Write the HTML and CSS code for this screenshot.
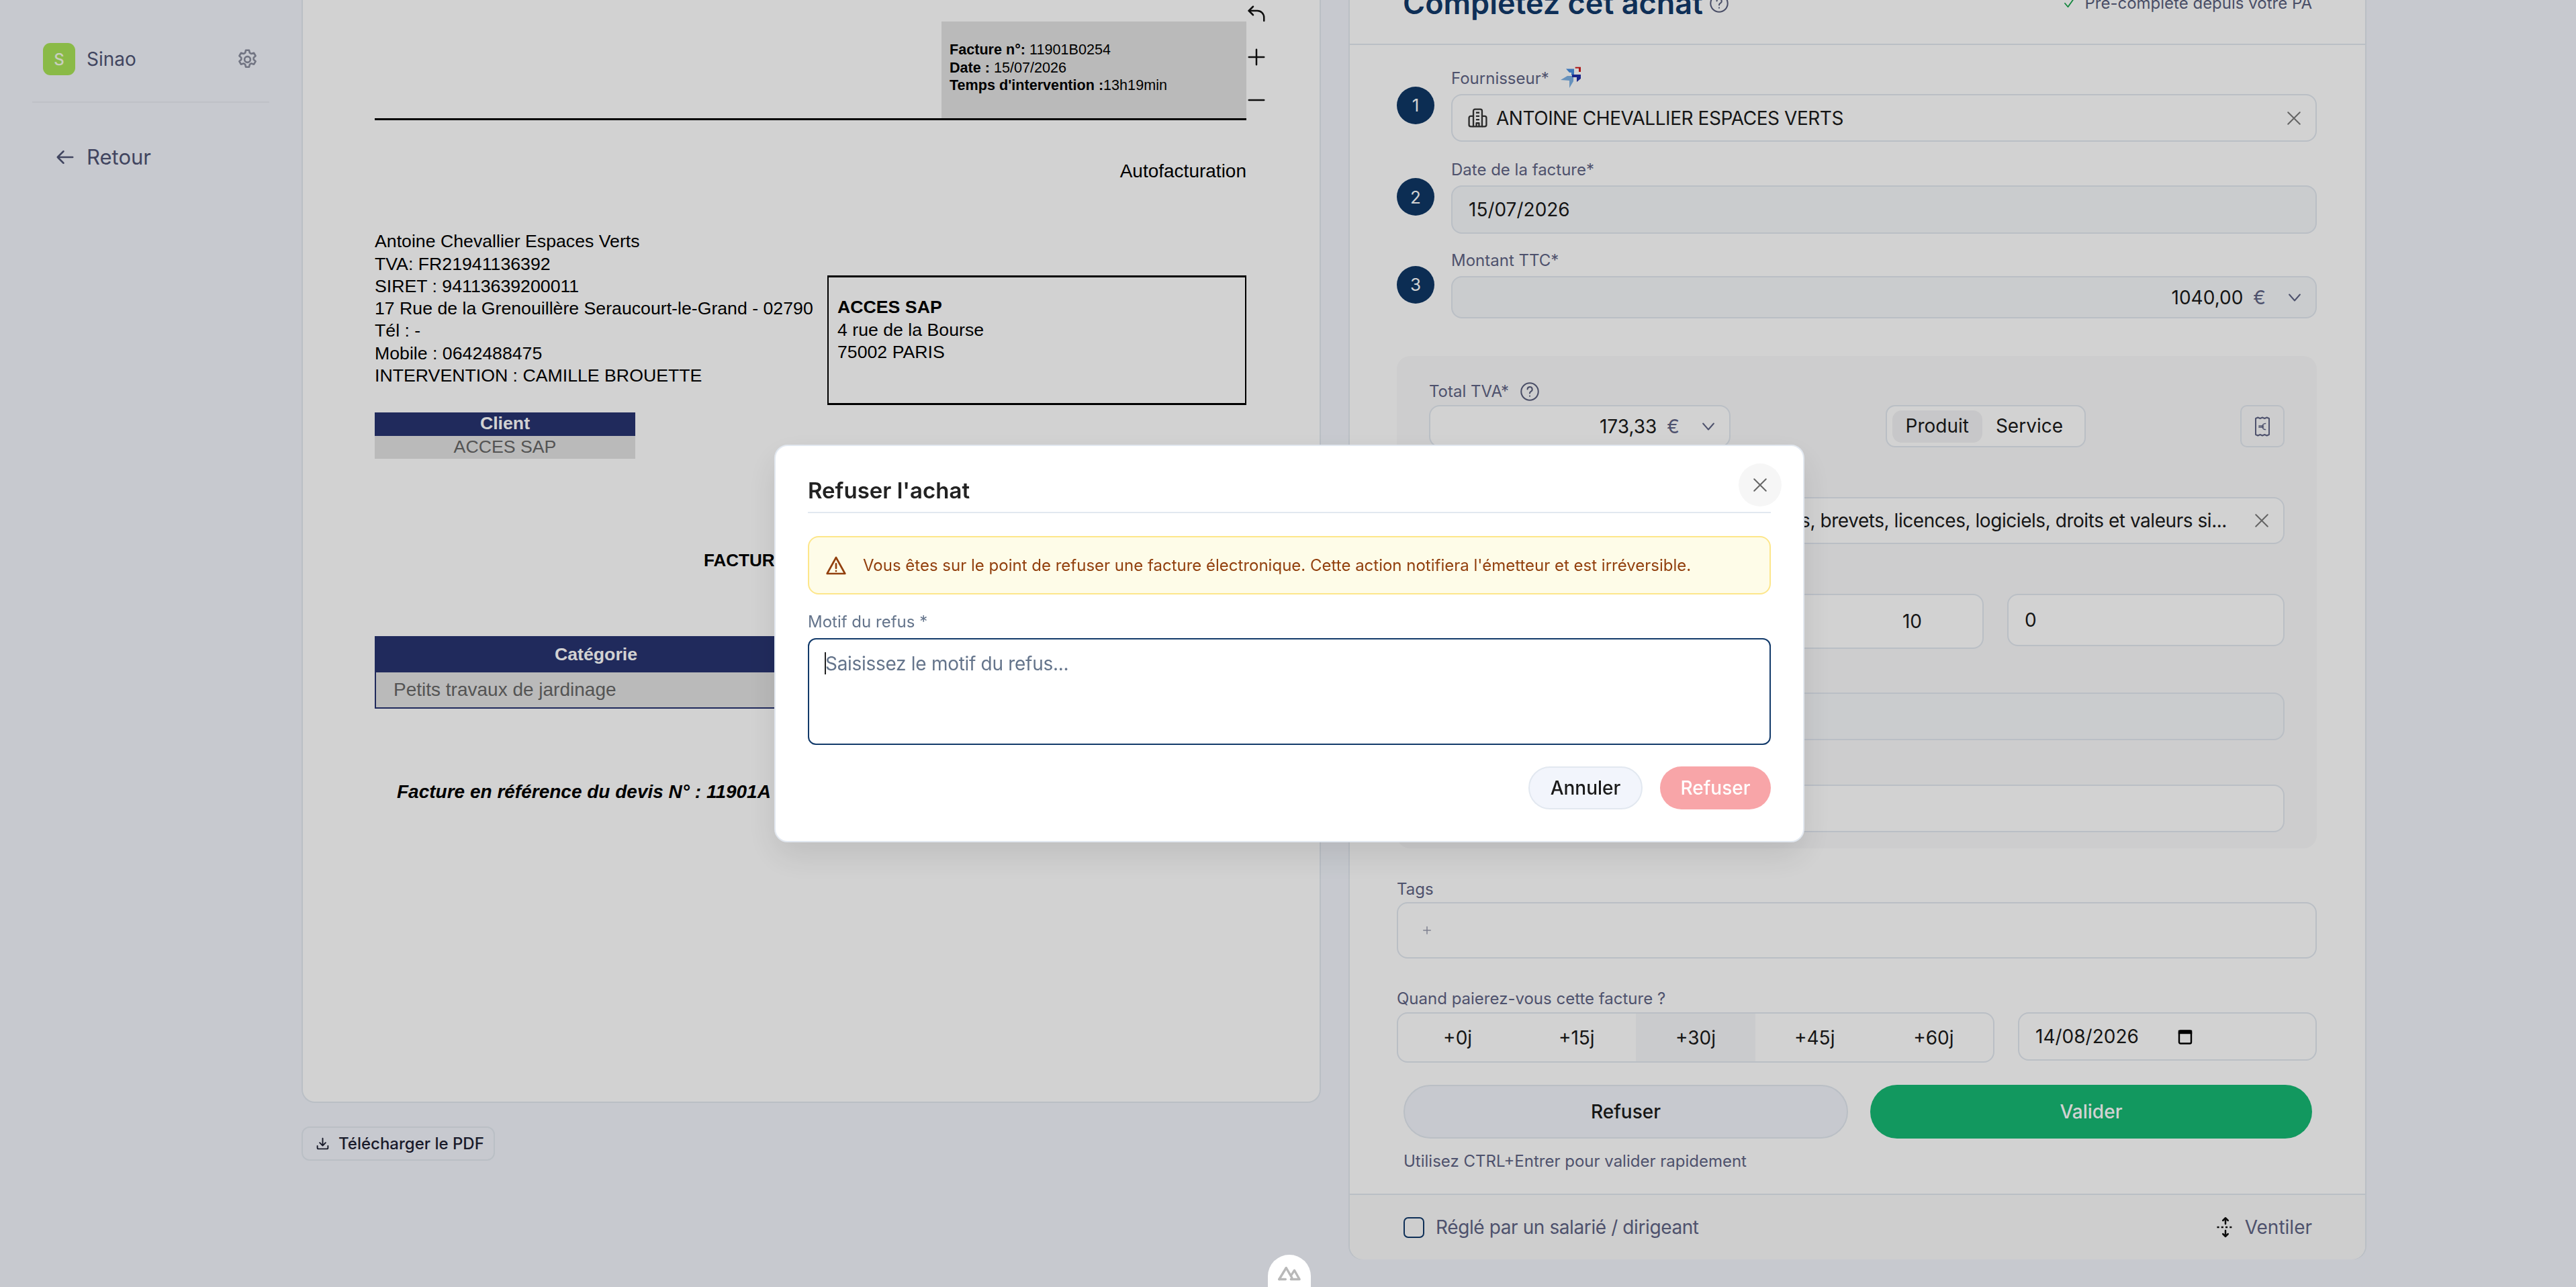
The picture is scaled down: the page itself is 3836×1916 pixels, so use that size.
FILE: index.html
```html
<!DOCTYPE html>
<html lang="fr">
<head>
    <meta charset="UTF-8">
    <title>Complétez cet achat</title>
    <link rel="stylesheet" href="styles.css">
</head>
<body>
    <aside class="sidebar">
        <div class="org">
            <span class="org-logo">S</span>
            <span class="org-name">Sinao</span>
            <svg class="org-gear" viewBox="0 0 24 24" fill="none" stroke="currentColor" stroke-width="1.8" stroke-linejoin="round"><path d="M10.3 2.6h3.4l.6 2.6 1.7 1 2.6-.8 1.7 3-2 1.8v2l2 1.7-1.7 3-2.6-.8-1.7 1-.6 2.6h-3.4l-.6-2.6-1.7-1-2.6.8-1.7-3 2-1.7v-2l-2-1.8 1.7-3 2.6.8 1.7-1z"/><circle cx="12" cy="12" r="3"/></svg>
        </div>
        <a class="back-link">
            <svg viewBox="0 0 24 24" fill="none" stroke="currentColor" stroke-width="2" stroke-linecap="round" stroke-linejoin="round"><path d="M21 12H3M10 5l-7 7 7 7"/></svg>
            Retour
        </a>
    </aside>

    <main class="main">
        <section class="pdf-col">
            <div class="pdf-card">
                <div class="pdf-tools">
                    <svg viewBox="0 0 24 24" fill="none" stroke="currentColor" stroke-width="2" stroke-linecap="round" stroke-linejoin="round"><path d="M8 3 3 8l5 5"/><path d="M3 8h10a8 8 0 0 1 8 8v4"/></svg>
                    <svg viewBox="0 0 24 24" fill="none" stroke="currentColor" stroke-width="2" stroke-linecap="round"><path d="M12 3v18M3 12h18"/></svg>
                    <svg viewBox="0 0 24 24" fill="none" stroke="currentColor" stroke-width="2" stroke-linecap="round"><path d="M3 12h18"/></svg>
                </div>
                <div class="pdf-page">
                    <div class="pdf-head">
                        <div class="pdf-ref">
                            <b>Facture n°:</b> 11901B0254<br>
                            <b>Date :</b> 15/07/2026<br>
                            <b>Temps d'intervention :</b>13h19min
                        </div>
                    </div>
                    <p class="pdf-type">Autofacturation</p>
                    <div class="pdf-parties">
                        <div class="pdf-seller">
                            Antoine Chevallier Espaces Verts<br>
                            TVA: FR21941136392<br>
                            SIRET : 94113639200011<br>
                            17 Rue de la Grenouillère Seraucourt-le-Grand - 02790<br>
                            Tél : -<br>
                            Mobile : 0642488475<br>
                            INTERVENTION : CAMILLE BROUETTE
                        </div>
                        <div class="pdf-buyer">
                            <b>ACCES SAP</b><br>
                            4 rue de la Bourse<br>
                            75002 PARIS
                        </div>
                    </div>
                    <div class="pdf-client">
                        <div class="pdf-th">Client</div>
                        <div class="pdf-td">ACCES SAP</div>
                    </div>
                    <p class="pdf-title">FACTURE</p>
                    <div class="pdf-table">
                        <div class="pdf-th">Catégorie</div>
                        <div class="pdf-td">Petits travaux de jardinage</div>
                    </div>
                    <p class="pdf-note">Facture en référence du devis N° : 11901A</p>
                </div>
            </div>
            <button class="pdf-download">
                <svg viewBox="0 0 24 24" fill="none" stroke="currentColor" stroke-width="2.2" stroke-linecap="round" stroke-linejoin="round"><path d="M12 3v12M7 10.5l5 5 5-5M3 16v3a2 2 0 0 0 2 2h14a2 2 0 0 0 2-2v-3"/></svg>
                Télécharger le PDF
            </button>
        </section>

        <section class="form-card">
            <header class="form-head">
                <h1>Complétez cet achat
                    <svg class="help" viewBox="1 1 22 22" fill="none" stroke="currentColor" stroke-width="1.6" stroke-linecap="round"><circle cx="12" cy="12" r="10"/><path d="M9.3 9.3a2.8 2.8 0 1 1 4 2.6c-.8.5-1.3 1-1.3 2"/><path d="M12 17.2v.1"/></svg>
                </h1>
                <span class="prefill">
                    <svg viewBox="0 0 24 24" fill="none" stroke="#16a34a" stroke-width="2.4" stroke-linecap="round" stroke-linejoin="round"><path d="m4 12 6 7L20 5"/></svg>
                    Pré-complété depuis votre PA
                </span>
            </header>

            <div class="form-body">
                <div class="step">
                    <span class="step-num">1</span>
                    <div class="field">
                        <label class="label label-icon">Fournisseur*
                            <svg class="pa-logo" viewBox="0 0 30 32"><path fill="#7fb2e5" d="M0 20 10 14h9v8l-6 10V21z"/><path fill="#4a90e2" d="M8 3.5h12V13h-4V9h-3z"/><path fill="#1f2fa8" d="M17 12h13v6l-6 5v-7h-7z"/><path fill="#d11f1f" d="M21.7.7H30V8h-3V2.7h-5.3z"/></svg>
                        </label>
                        <div class="input input-tall">
                            <svg class="icon-building" viewBox="0 0 24 24" fill="none" stroke="currentColor" stroke-width="1.8" stroke-linejoin="round"><path d="M7 22V4a2 2 0 0 1 2-2h6a2 2 0 0 1 2 2v18z"/><path d="M7 10H4a2 2 0 0 0-2 2v8a2 2 0 0 0 2 2h3M17 10h3a2 2 0 0 1 2 2v8a2 2 0 0 1-2 2h-3M10 6h4M10 10h4M10 14h4M10.5 22v-4h3v4"/></svg>
                            <span class="input-grow supplier-name">ANTOINE CHEVALLIER ESPACES VERTS</span>
                            <svg class="icon-x" viewBox="4 4 16 16" fill="none" stroke="currentColor" stroke-width="1.6" stroke-linecap="round"><path d="M5 5l14 14M19 5 5 19"/></svg>
                        </div>
                    </div>
                </div>
                <div class="step step-date">
                    <span class="step-num">2</span>
                    <div class="field">
                        <label class="label">Date de la facture*</label>
                        <div class="input input-date input-off">15/07/2026</div>
                    </div>
                </div>
                <div class="step">
                    <span class="step-num">3</span>
                    <div class="field">
                        <label class="label">Montant TTC*</label>
                        <div class="input input-amount input-off">
                            <span class="input-grow num">1040,00</span>
                            <span class="euro">€</span>
                            <svg class="icon-chev" viewBox="4 6 16 12" fill="none" stroke="currentColor" stroke-width="1.8" stroke-linecap="round" stroke-linejoin="round"><path d="m5 8 7 8 7-8"/></svg>
                        </div>
                    </div>
                </div>

                <div class="panel">
                    <label class="label label-icon">Total TVA*
                        <svg class="help" viewBox="1 1 22 22" fill="none" stroke="currentColor" stroke-width="1.6" stroke-linecap="round"><circle cx="12" cy="12" r="10"/><path d="M9.3 9.3a2.8 2.8 0 1 1 4 2.6c-.8.5-1.3 1-1.3 2"/><path d="M12 17.2v.1"/></svg>
                    </label>
                    <div class="panel-top">
                        <div class="input input-vat">
                            <span class="input-grow num">173,33</span>
                            <span class="euro">€</span>
                            <svg class="icon-chev" viewBox="4 6 16 12" fill="none" stroke="currentColor" stroke-width="1.8" stroke-linecap="round" stroke-linejoin="round"><path d="m5 8 7 8 7-8"/></svg>
                        </div>
                        <div class="kind-toggle">
                            <span class="kind kind-on">Produit</span>
                            <span class="kind">Service</span>
                        </div>
                        <span class="receipt-btn">
                            <svg viewBox="0 0 24 30" fill="none" stroke="currentColor" stroke-width="2" stroke-linejoin="round" stroke-linecap="round"><path d="M2 3l3.3-1.5L8.6 3 12 1.5 15.3 3l3.3-1.5L22 3v24l-3.4 1.5-3.3-1.5-3.3 1.5L8.6 27l-3.3 1.5L2 27z"/><path d="M16.5 10.5a4.5 4.5 0 1 0 0 9M7 14h6.500M7 16h6.500" stroke-width="1.7"/></svg>
                        </span>
                    </div>
                    <div class="input input-cat">
                        <span class="cat-text">Concessions, brevets, licences, logiciels, droits et valeurs si...</span>
                        <svg class="icon-x" viewBox="4 4 16 16" fill="none" stroke="currentColor" stroke-width="1.6" stroke-linecap="round"><path d="M5 5l14 14M19 5 5 19"/></svg>
                    </div>
                    <div class="panel-row">
                        <div class="input input-qty">10</div>
                        <div class="input input-zero">0</div>
                    </div>
                    <div class="input input-line input-off"></div>
                    <div class="input input-line input-last"></div>
                </div>

                <label class="label label-tags">Tags</label>
                <div class="input input-tags">
                    <svg viewBox="0 0 24 24" fill="none" stroke="currentColor" stroke-width="2" stroke-linecap="round"><path d="M12 5v14M5 12h14"/></svg>
                </div>

                <label class="label label-when">Quand paierez-vous cette facture ?</label>
                <div class="terms-row">
                    <div class="terms">
                        <span class="term">+0j</span>
                        <span class="term">+15j</span>
                        <span class="term term-on">+30j</span>
                        <span class="term">+45j</span>
                        <span class="term">+60j</span>
                    </div>
                    <div class="input input-due">
                        <span>14/08/2026</span>
                        <svg viewBox="0 0 22 24" fill="none" stroke="#000" stroke-width="2.4"><rect x="2" y="3.5" width="18" height="19" rx="2"/><path d="M2 4h18v3H2z" fill="#000"/></svg>
                    </div>
                </div>

                <div class="actions">
                    <button class="btn-refuse">Refuser</button>
                    <button class="btn-validate">Valider</button>
                </div>
                <p class="hint">Utilisez CTRL+Entrer pour valider rapidement</p>
            </div>

            <footer class="form-foot">
                <label class="paid-by"><span class="checkbox"></span>Réglé par un salarié / dirigeant</label>
                <span class="split">
                    <svg viewBox="1 0 22 24" fill="none" stroke="#111" stroke-width="2" stroke-linecap="round" stroke-linejoin="round"><path d="M12 8V1.5M9 4l3-3 3 3M12 16v6.5M9 20l3 3 3-3"/><path d="M2 12h20" stroke-dasharray="2.5 2.5" stroke-linecap="butt"/></svg>
                    Ventiler
                </span>
            </footer>
        </section>
    </main>

    <div class="overlay">
        <div class="modal">
            <div class="modal-head">
                <h2>Refuser l'achat</h2>
                <button class="modal-close">
                    <svg viewBox="4 4 16 16" fill="none" stroke="currentColor" stroke-width="1.6" stroke-linecap="round"><path d="M5 5l14 14M19 5 5 19"/></svg>
                </button>
            </div>
            <div class="alert">
                <svg viewBox="0 0 24 24" fill="none" stroke="currentColor" stroke-width="2" stroke-linecap="round" stroke-linejoin="round"><path d="M12 3 2 21h20z"/><path d="M12 10v5M12 18v.1"/></svg>
                Vous êtes sur le point de refuser une facture électronique. Cette action notifiera l'émetteur et est irréversible.
            </div>
            <label class="modal-label">Motif du refus *</label>
            <div class="modal-field">
                <textarea class="modal-text" placeholder="Saisissez le motif du refus..."></textarea>
            </div>
            <div class="modal-actions">
                <button class="modal-cancel">Annuler</button>
                <button class="modal-refuse">Refuser</button>
            </div>
        </div>
    </div>

    <button class="nuxt-btn">
        <svg viewBox="0 0 36 24" fill="none" stroke="#b9b9b9" stroke-width="3.6" stroke-linejoin="round" stroke-linecap="round"><path d="M2 21 13 3l9 15.5"/><path d="M20.5 21H34L26 7l-5 7.5"/><path d="M2 21h10"/></svg>
    </button>
</body>
</html>
```

FILE: styles.css
```css
/* Global Styles */
* {
    box-sizing: border-box;
}

body {
    margin: 0;
    height: 1916px;
    overflow: hidden;
    display: flex;
    background: #f2f5fc;
    font-family: "Inter", sans-serif;
    font-size: 28px;
    color: #1a1a1a;
}

button {
    font-family: inherit;
    cursor: pointer;
}

/* Sidebar */
.sidebar {
    width: 449px;
    flex-shrink: 0;
    padding: 64px 48px 0;
}

.org {
    display: flex;
    align-items: center;
    height: 48px;
    margin-bottom: 41px;
    padding-left: 16px;
    color: #4f5475;
    position: relative;
}

.org::after {
    content: "";
    position: absolute;
    left: 0;
    right: 0;
    bottom: -41px;
    border-bottom: 2px solid #e8ebf1;
}

.org-logo {
    width: 48px;
    height: 48px;
    border-radius: 11px;
    background: #a8e257;
    color: #f4fbe8;
    font-size: 24px;
    font-weight: 500;
    display: flex;
    align-items: center;
    justify-content: center;
    margin-right: 17px;
}

.org-name {
    flex: 1;
}

.org-gear {
    width: 35px;
    height: 35px;
    margin-right: 15px;
    color: #8b8e9f;
}

.back-link {
    display: flex;
    align-items: center;
    gap: 17px;
    margin-top: 103px;
    padding-left: 34px;
    font-size: 31px;
    color: #4f5475;
    line-height: 38px;
}

.back-link svg {
    width: 30px;
    height: 30px;
}

/* Main columns */
.main {
    display: flex;
    gap: 41px;
    align-items: flex-start;
}

.pdf-col {
    width: 1518px;
}

.pdf-card {
    height: 1642px;
    background: #fff;
    border: 2px solid #e2e8f0;
    border-top: none;
    border-radius: 0 0 20px 20px;
    position: relative;
    overflow: hidden;
}

.pdf-tools {
    position: absolute;
    top: 6px;
    left: 1405px;
    display: flex;
    flex-direction: column;
    gap: 34px;
    color: #111;
}

.pdf-tools svg {
    width: 30px;
    height: 30px;
}

/* Invoice rendered inside the viewer */
.pdf-page {
    padding: 0 109px 0 107px;
    font-family: "Liberation Sans", Arial, sans-serif;
    font-size: 26.7px;
    line-height: 33.3px;
    color: #000;
}

.pdf-head {
    display: flex;
    justify-content: flex-end;
    padding-top: 32px;
    border-bottom: 3px solid #000;
}

.pdf-ref {
    width: 454px;
    height: 144px;
    padding: 29px 12px 0;
    background: #e2e2e2;
    font-size: 21.6px;
    line-height: 26.7px;
}

.pdf-type {
    margin: 59px 0 0;
    text-align: right;
    font-size: 28px;
}

.pdf-parties {
    display: flex;
    justify-content: space-between;
    margin-top: 72px;
}

.pdf-seller {
    white-space: nowrap;
}

.pdf-buyer {
    width: 624px;
    height: 193px;
    margin-top: 67px;
    padding: 28px 13px 0;
    border: 2px solid #000;
    border-width: 3px 2px;
}

.pdf-client {
    width: 388px;
    margin-top: 11px;
    text-align: center;
}

.pdf-th {
    height: 35px;
    line-height: 33px;
    background: #283470;
    color: #fff;
    font-weight: 700;
    text-align: center;
}

.pdf-td {
    height: 34px;
    line-height: 32px;
    background: #e2e2e2;
    color: #666;
}

.pdf-title {
    margin: 135px 0 0 490px;
    font-weight: 700;
    font-size: 26px;
}

.pdf-table {
    margin-top: 95px;
    border: 2px solid #283470;
    border-top: none;
    height: 108px;
}

.pdf-table .pdf-th {
    height: 54px;
    line-height: 54px;
    width: 655px;
}

.pdf-table .pdf-td {
    height: 52px;
    line-height: 52px;
    padding-left: 26px;
    font-size: 28px;
}

.pdf-note {
    margin: 107px 0 0 33px;
    font-weight: 700;
    font-style: italic;
    font-size: 28px;
}

.pdf-download {
    display: flex;
    align-items: center;
    gap: 13px;
    width: 288px;
    height: 51px;
    margin-top: 35px;
    padding: 0 0 0 19px;
    background: #f2f5fc;
    border: 2px solid #e2e8f0;
    border-radius: 12px;
    font-size: 24px;
    font-weight: 500;
    color: #1f2133;
    white-space: nowrap;
}

.pdf-download svg {
    width: 21px;
    height: 21px;
}

/* Form card */
.form-card {
    width: 1516px;
    height: 1875px;
    background: #fff;
    border: 2px solid #e2e8f0;
    border-top: none;
    border-radius: 0 0 20px 20px;
}

.form-head {
    height: 67px;
    display: flex;
    justify-content: space-between;
    align-items: flex-end;
    padding: 0 79px 37px 79px;
    border-bottom: 2px solid #e2e8f0;
}

.form-head h1 {
    margin: 0 0 -2px;
    font-size: 45px;
    line-height: 50px;
    font-weight: 600;
    color: #123a6a;
    white-space: nowrap;
    display: flex;
    align-items: center;
    gap: 10px;
}

.help {
    width: 28px;
    height: 28px;
    color: #5a5f7d;
}

.prefill {
    display: flex;
    align-items: center;
    gap: 14px;
    margin-bottom: 9px;
    font-size: 24px;
    color: #5a5f7d;
    white-space: nowrap;
}

.prefill svg {
    width: 18px;
    height: 18px;
}

.form-body {
    padding: 35px 72px 0 70px;
}

.label {
    display: block;
    font-size: 24px;
    line-height: 30px;
    color: #5f6485;
}

.label-icon {
    display: flex;
    align-items: center;
    gap: 17px;
}

.pa-logo {
    width: 30px;
    height: 32px;
    margin: -5px 0 -1px;
}

.step {
    display: flex;
    align-items: center;
    gap: 25px;
    margin-bottom: 27px;
}

.step-date {
    margin-bottom: 25px;
}

.step-num {
    width: 56px;
    height: 56px;
    flex-shrink: 0;
    border-radius: 50%;
    background: #0f3765;
    color: #fff;
    font-size: 26px;
    display: flex;
    align-items: center;
    justify-content: center;
}

.field {
    flex: 1;
}

.field .label {
    margin-bottom: 8px;
}

.input {
    display: flex;
    align-items: center;
    border: 2px solid #e2e8f0;
    border-radius: 16px;
    padding: 0 24px;
    background: #fff;
    color: #1a1a1a;
}

.input-off {
    background: #f6f8fa;
}

.input-tall {
    height: 71px;
    padding-left: 22px;
    padding-right: 22px;
}

.input-date {
    height: 72px;
}

.input-grow {
    flex: 1;
}

.supplier-name {
    letter-spacing: -0.45px;
}

.num {
    text-align: right;
}

.euro {
    margin-left: 15px;
    color: #5f6485;
}

.input-amount {
    height: 63px;
    padding-right: 22px;
}

.icon-building {
    width: 31px;
    height: 31px;
    margin-right: 12px;
    color: #333;
}

.icon-x {
    width: 20px;
    height: 20px;
    color: #7a7a7a;
}

.icon-chev {
    width: 18px;
    height: 14px;
    margin-left: 34px;
    color: #5f6485;
}

/* Grey VAT panel */
.panel {
    height: 733px;
    margin-top: 56px;
    padding: 38px 48px 0;
    background: #f9f9fa;
    border-radius: 20px;
}

.panel > .label {
    margin-bottom: 5px;
}

.panel-top {
    display: flex;
    align-items: center;
    justify-content: space-between;
}

.input-vat {
    width: 449px;
    height: 63px;
    padding-right: 22px;
}

.kind-toggle {
    display: flex;
    align-items: center;
    width: 298px;
    height: 63px;
    padding: 0 8px;
    background: #fff;
    border: 2px solid #e2e8f0;
    border-radius: 14px;
}

.kind {
    padding: 0 20px;
    height: 48px;
    line-height: 46px;
    border-radius: 14px;
}

.kind-on {
    background: #f2f2f4;
}

.receipt-btn {
    width: 66px;
    height: 63px;
    border: 2px solid #e2e8f0;
    border-radius: 10px;
    display: flex;
    align-items: center;
    justify-content: center;
    color: #5f6485;
}

.receipt-btn svg {
    width: 24px;
    height: 30px;
}

.input-cat {
    height: 70px;
    margin-top: 74px;
    padding-right: 22px;
    gap: 42px;
}

.cat-text {
    flex: 1;
    text-align: right;
    white-space: nowrap;
    letter-spacing: -0.45px;
}

.panel-row {
    display: flex;
    justify-content: space-between;
    align-items: flex-start;
    margin-top: 74px;
}

.input-qty {
    width: 826px;
    height: 82px;
    justify-content: flex-end;
    padding-right: 90px;
}

.input-zero {
    width: 413px;
    height: 78px;
}

.input-line {
    height: 71px;
    margin-top: 65px;
}

.input-last {
    margin-top: 66px;
}

.label-tags {
    margin-top: 46px;
}

.input-tags {
    height: 84px;
    margin-top: 4px;
    padding: 0 34px;
    color: #9a9db0;
}

.input-tags svg {
    width: 18px;
    height: 18px;
}

.label-when {
    margin-top: 45px;
}

.terms-row {
    display: flex;
    justify-content: space-between;
    align-items: flex-start;
    margin-top: 5px;
}

.terms {
    display: flex;
    width: 890px;
    height: 75px;
    border: 2px solid #e2e8f0;
    border-radius: 16px;
    overflow: hidden;
}

.term {
    flex: 1;
    display: flex;
    align-items: center;
    justify-content: center;
}

.term-on {
    background: #f6f7f9;
}

.input-due {
    width: 445px;
    height: 72px;
    gap: 58px;
}

.input-due svg {
    width: 22px;
    height: 24px;
}

.actions {
    display: flex;
    gap: 33px;
    margin: 33px 7px 0 10px;
}

.btn-refuse,
.btn-validate {
    flex: 1;
    height: 80px;
    border-radius: 40px;
    font-size: 28px;
    font-weight: 500;
}

.btn-refuse {
    background: #f2f5fc;
    border: 2px solid #e2e8f0;
    color: #1a1a1a;
}

.btn-validate {
    background: #17b974;
    border: none;
    color: #fff;
}

.hint {
    margin: 19px 0 0 10px;
    font-size: 24px;
    line-height: 30px;
    color: #5f6485;
}

.form-foot {
    display: flex;
    justify-content: space-between;
    align-items: center;
    height: 98px;
    margin-top: 33px;
    padding: 0 79px 0 80px;
    border-top: 2px solid #e2e8f0;
    background: #fafafa;
    border-radius: 0 0 20px 20px;
}

.paid-by {
    display: flex;
    align-items: center;
    gap: 17px;
    letter-spacing: -0.4px;
    color: #5f6485;
}

.checkbox {
    width: 31px;
    height: 31px;
    border: 2px solid #123a6a;
    border-radius: 7px;
}

.split {
    display: flex;
    align-items: center;
    gap: 14px;
    color: #5f6485;
}

.split svg {
    width: 30px;
    height: 30px;
}

/* Modal */
.overlay {
    position: fixed;
    inset: 0;
    padding-left: 4px;
    display: flex;
    align-items: center;
    justify-content: center;
    background: rgba(0, 0, 0, 0.176);
}

.modal {
    width: 1534px;
    height: 592px;
    padding: 26px 48px 0;
    background: #fff;
    border: 2px solid #e2e8f0;
    border-radius: 20px;
    box-shadow: 0 20px 50px rgba(0, 0, 0, 0.1);
}

.modal-head {
    display: flex;
    justify-content: space-between;
    height: 74px;
    border-bottom: 2px solid #e2e8f0;
    margin-bottom: 34px;
}

.modal-head h2 {
    margin: 19px 0 0;
    font-size: 33px;
    line-height: 42px;
    font-weight: 600;
    color: #222;
}

.modal-close {
    width: 64px;
    height: 64px;
    margin-right: -16px;
    border: none;
    border-radius: 50%;
    background: #f6f6f6;
    color: #666;
    display: flex;
    align-items: center;
    justify-content: center;
}

.modal-close svg {
    width: 20px;
    height: 20px;
}

.alert {
    display: flex;
    align-items: center;
    gap: 24px;
    height: 87px;
    padding: 0 24px;
    background: #fefce8;
    border: 2px solid #fde68a;
    border-radius: 16px;
    font-size: 24px;
    color: #92400e;
}

.alert svg {
    width: 32px;
    height: 32px;
    flex-shrink: 0;
}

.modal-label {
    display: block;
    margin-top: 26px;
    font-size: 24px;
    line-height: 30px;
    color: #64748b;
}

.modal-field {
    position: relative;
    margin-top: 9px;
}

/* text caret of the focused field */
.modal-field::before {
    content: "";
    position: absolute;
    left: 25px;
    top: 21px;
    width: 2px;
    height: 33px;
    background: #222;
}

.modal-text {
    display: block;
    width: 100%;
    height: 159px;
    padding: 18px 24px;
    border: 2px solid #123a6a;
    border-radius: 12px;
    outline: none;
    resize: none;
    font-family: inherit;
    font-size: 28px;
    line-height: 36px;
    letter-spacing: -0.3px;
}

.modal-text::placeholder {
    color: #64748b;
}

.modal-actions {
    display: flex;
    justify-content: flex-end;
    gap: 26px;
    margin-top: 32px;
}

.modal-cancel,
.modal-refuse {
    height: 64px;
    border-radius: 32px;
    font-size: 28px;
    font-weight: 500;
}

.modal-cancel {
    width: 170px;
    background: #f2f5fc;
    border: 2px solid #e2e8f0;
    color: #1a1a1a;
}

.modal-refuse {
    width: 165px;
    background: #f8a5a8;
    border: none;
    color: #fff;
}

/* Dev tools launcher */
.nuxt-btn {
    position: fixed;
    left: 1888px;
    top: 1868px;
    width: 64px;
    height: 80px;
    padding: 16px 0 0;
    border: none;
    border-radius: 32px;
    background: #fff;
    display: flex;
    justify-content: center;
    align-items: flex-start;
}

.nuxt-btn svg {
    width: 34px;
    height: 24px;
}
```
